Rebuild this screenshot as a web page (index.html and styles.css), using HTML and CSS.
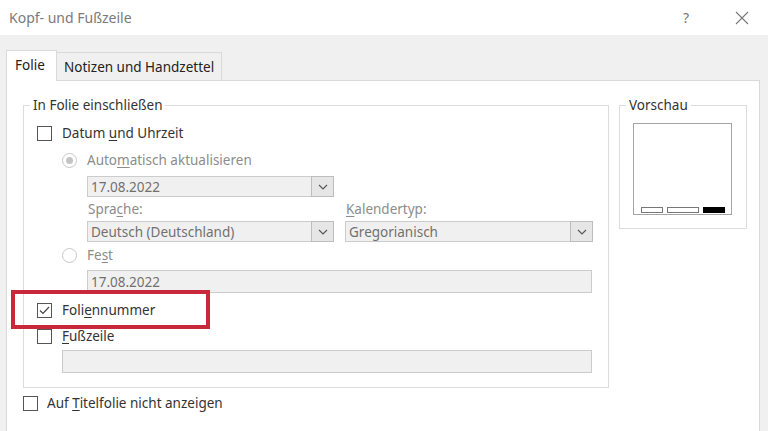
FILE: index.html
```html
<!DOCTYPE html>
<html lang="de">
<head>
<meta charset="utf-8">
<title>Kopf- und Fußzeile</title>
<link rel="stylesheet" href="styles.css">
</head>
<body>
<div class="dialog">
  <div class="titlebar">
    <span class="title">Kopf- und Fußzeile</span>
    <span class="tb-help">?</span>
    <span class="tb-close">
      <svg width="14" height="14" viewBox="0 0 14 14"><path d="M1 1 L13 13 M13 1 L1 13" stroke="#777" stroke-width="1.1" fill="none"/></svg>
    </span>
  </div>
  <div class="client">
    <div class="tabs">
      <div class="tab active">Folie</div>
      <div class="tab">Notizen und Handzettel</div>
    </div>
    <div class="panel">
      <fieldset class="group main">
        <legend>In Folie einschließen</legend>
        <div class="row r-datum">
          <span class="cb"></span>
          <span class="lbl">Datum <u>u</u>nd Uhrzeit</span>
        </div>
        <div class="row r-auto indent1">
          <span class="rb checked"></span>
          <span class="lbl dis">Auto<u>m</u>atisch aktualisieren</span>
        </div>
        <div class="combo c-date indent2">
          <span class="ctext">17.08.2022</span>
          <span class="cbtn"><svg width="10" height="6" viewBox="0 0 10 6"><path d="M1 1 L5 5 L9 1" stroke="#555" stroke-width="1.1" fill="none"/></svg></span>
        </div>
        <div class="pair indent2 labels">
          <span class="flab dis">Spra<u>c</u>he:</span>
          <span class="flab dis"><u>K</u>alendertyp:</span>
        </div>
        <div class="pair indent2 combos">
          <div class="combo">
            <span class="ctext">Deutsch (Deutschland)</span>
            <span class="cbtn"><svg width="10" height="6" viewBox="0 0 10 6"><path d="M1 1 L5 5 L9 1" stroke="#555" stroke-width="1.1" fill="none"/></svg></span>
          </div>
          <div class="combo">
            <span class="ctext">Gregorianisch</span>
            <span class="cbtn"><svg width="10" height="6" viewBox="0 0 10 6"><path d="M1 1 L5 5 L9 1" stroke="#555" stroke-width="1.1" fill="none"/></svg></span>
          </div>
        </div>
        <div class="row r-fest indent1">
          <span class="rb"></span>
          <span class="lbl dis">Fe<u>s</u>t</span>
        </div>
        <div class="textbox t-fest indent2">17.08.2022</div>
        <div class="row r-num">
          <span class="cb"><svg width="13" height="13" viewBox="0 0 13 13"><path d="M2 6.5 L5 9.5 L11 3" stroke="#444" stroke-width="1.2" fill="none"/></svg></span>
          <span class="lbl">Foli<u>e</u>nnummer</span>
        </div>
        <div class="row r-fuss">
          <span class="cb"></span>
          <span class="lbl"><u>F</u>ußzeile</span>
        </div>
        <div class="textbox t-fuss indent1"></div>
        <div class="highlight"></div>
      </fieldset>
      <fieldset class="group preview">
        <legend>Vorschau</legend>
        <div class="slide">
          <span class="bar b1"></span>
          <span class="bar b2"></span>
          <span class="bar b3"></span>
        </div>
      </fieldset>
      <div class="row r-title">
        <span class="cb"></span>
        <span class="lbl">Auf <u>T</u>itelfolie nicht anzeigen</span>
      </div>
    </div>
  </div>
</div>
</body>
</html>
```

FILE: styles.css
```css
* { box-sizing: border-box; }
html, body { margin: 0; padding: 0; }
body {
  width: 768px;
  height: 431px;
  overflow: hidden;
  font-family: "Noto Sans", "Open Sans", sans-serif;
  font-size: 13.5px;
  color: #333;
  background: #f0f0f0;
}
u { text-decoration: underline; text-underline-offset: 2px; }

.dialog { width: 768px; height: 431px; display: flex; flex-direction: column; }

.titlebar {
  height: 35px;
  background: #fff;
  display: flex;
  align-items: center;
  padding-left: 9px;
}
.title { color: #7a7a7a; font-size: 14px; flex: 1; }
.tb-help { color: #777; font-size: 14px; width: 14px; margin-right: 42px; text-align: center; }
.tb-close { width: 14px; height: 14px; margin-right: 19px; display: flex; }

.client {
  flex: 1;
  background: #f0f0f0;
  padding: 15px 8px 0 6px;
  display: flex;
  flex-direction: column;
}

.tabs { display: flex; align-items: flex-end; height: 30px; position: relative; z-index: 1; }
.tab {
  height: 28px;
  border: 1px solid #d9d9d9;
  border-bottom: none;
  padding: 0 7px;
  display: flex;
  align-items: center;
  background: #f0f0f0;
  color: #222;
  margin-left: -1px;
}
.tab.active {
  height: 31px;
  margin-left: 0;
  margin-bottom: -1px;
  background: #fff;
  width: 51px;
  padding-left: 8px;
  padding-bottom: 2px;
}

.panel {
  flex: 1;
  background: #fff;
  border: 1px solid #d9d9d9;
  border-bottom: none;
  padding: 15px 0 0 16px;
  display: grid;
  grid-template-columns: 586px 128px;
  column-gap: 10px;
  grid-template-rows: auto auto;
  align-content: start;
}

.group {
  margin: 0;
  border: 1px solid #dcdcdc;
  padding: 0;
  min-width: 0;
}
.group legend {
  margin-left: 6px;
  padding: 0 3px;
  color: #333;
  font-size: 13.5px;
  line-height: 18px;
}

.main {
  height: 292px;
  display: flex;
  flex-direction: column;
  position: relative;
}
.preview { height: 133px; align-self: start; }

.row { display: flex; align-items: center; height: 20px; }
.indent1 { margin-left: 38px; }
.indent2 { margin-left: 63px; }

.cb {
  width: 15px; height: 15px;
  border: 1px solid #555;
  background: #fff;
  display: flex; align-items: center; justify-content: center;
  margin-left: 13px;
  margin-right: 10px;
  flex: none;
}
.rb {
  width: 15px; height: 15px;
  border: 1px solid #c8c8c8;
  border-radius: 50%;
  background: #fff;
  margin-right: 10px;
  flex: none;
  display: flex; align-items: center; justify-content: center;
}
.rb.checked::after {
  content: "";
  width: 7px; height: 7px;
  border-radius: 50%;
  background: #c4c4c4;
}
.lbl { white-space: nowrap; }
.dis { color: #8c8c8c; }

.r-datum { margin-top: 9px; }
.r-auto { margin-top: 7px; }

.combo {
  height: 21px;
  border: 1px solid #cccccc;
  background: #f0f0f0;
  display: flex;
  align-items: center;
  color: #707070;
}
.c-date { width: 247px; margin-top: 6px; }
.ctext { flex: 1; padding-left: 3px; white-space: nowrap; }
.cbtn {
  width: 23px; height: 21px;
  margin: -1px -1px -1px 0;
  border: 1px solid #bdbdbd;
  background: #e6e6e6;
  display: flex; align-items: center; justify-content: center;
}

.pair { display: grid; grid-template-columns: 247px 248px; column-gap: 11px; }
.labels { margin-top: 3px; height: 18px; align-items: center; }
.flab { padding-left: 1px; }
.combos { margin-top: 3px; }

.r-fest { margin-top: 3px; }

.textbox {
  height: 23px;
  border: 1px solid #cccccc;
  background: #f0f0f0;
  color: #707070;
  padding-left: 3px;
  display: flex; align-items: center;
}
.t-fest { width: 505px; margin-top: 5px; }
.r-num { margin-top: 7px; }
.r-fuss { margin-top: 6px; }
.t-fuss { width: 530px; margin-top: 4px; }

.highlight {
  position: absolute;
  left: -13px;
  top: 176px;
  width: 199px;
  height: 39px;
  border: 4px solid #c9283b;
  pointer-events: none;
}

.slide {
  width: 99px;
  height: 92px;
  margin: 9px 0 0 13px;
  border: 1px solid #a5a5a5;
  background: #fff;
  display: flex;
  align-items: flex-end;
  padding: 0 6px 1px 7px;
  gap: 4px;
}
.bar { height: 6px; border: 1px solid #777; background: #fff; }
.b1 { width: 22px; }
.b2 { width: 33px; }
.b3 { width: 22px; background: #000; border-color: #000; }

.r-title { grid-column: 1 / 3; margin-top: 5px; }
.r-title .cb { margin-left: 0; margin-right: 9px; }
```
